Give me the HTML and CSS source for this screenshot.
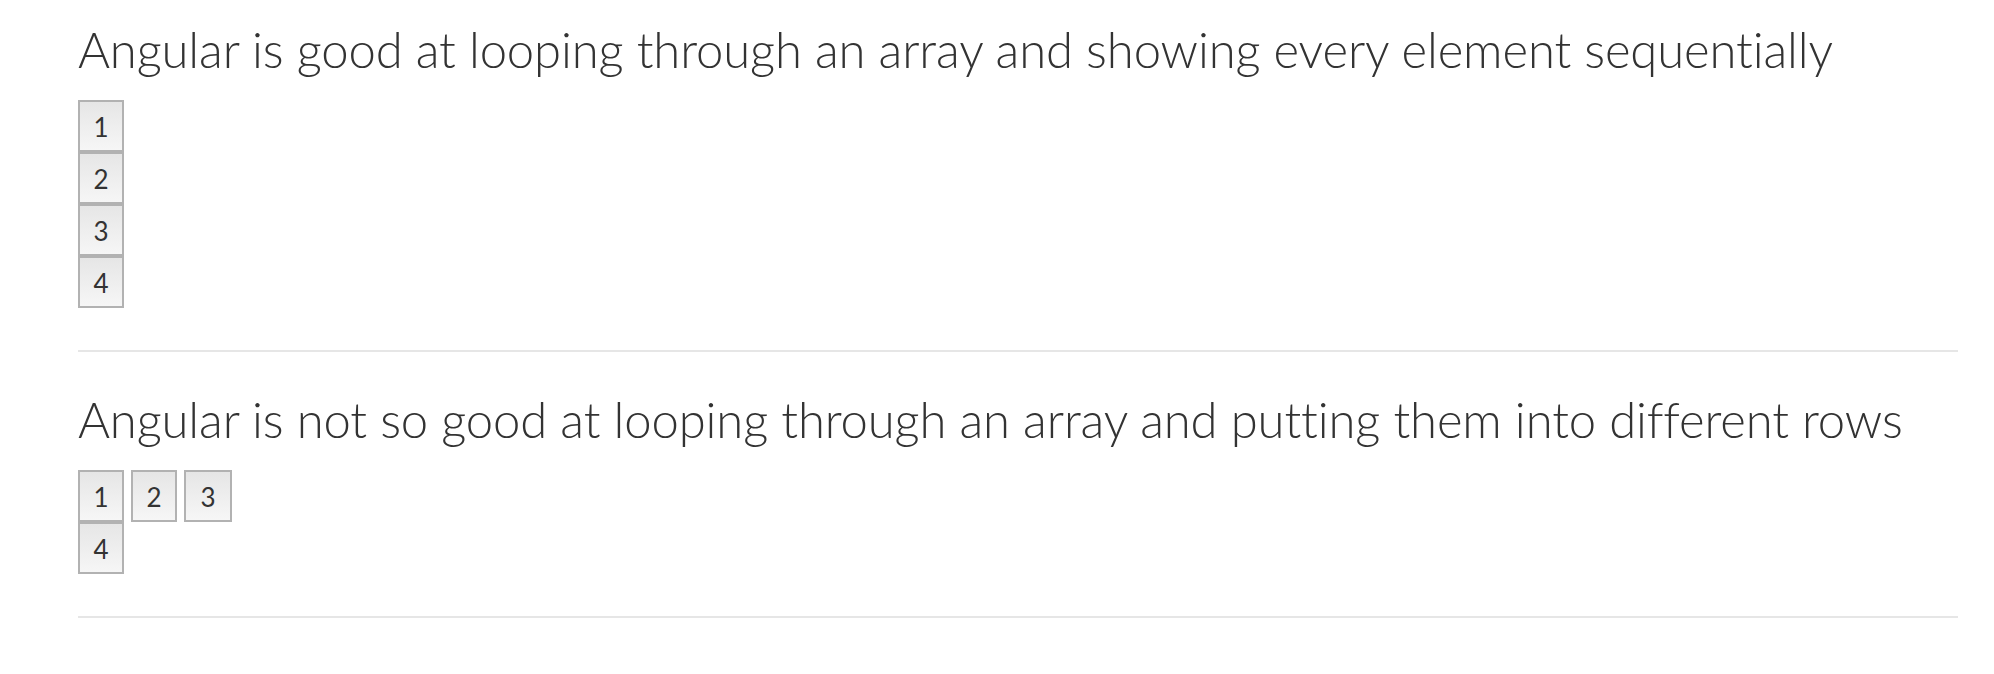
FILE: index.html
```html
<!DOCTYPE html>
<html lang="en">
<head>
<meta charset="utf-8">
<title>Angular loops</title>
<link rel="stylesheet" href="styles.css">
</head>
<body>
<div class="page">
  <section class="demo">
    <h2 class="demo-title">Angular is good at looping through an array and showing every element sequentially</h2>
    <div class="stack">
      <div class="cell">1</div>
      <div class="cell">2</div>
      <div class="cell">3</div>
      <div class="cell">4</div>
    </div>
  </section>
  <hr class="divider">
  <section class="demo">
    <h2 class="demo-title">Angular is not so good at looping through an array and putting them into different rows</h2>
    <div class="stack">
      <div class="row">
        <div class="cell">1</div>
        <div class="cell">2</div>
        <div class="cell cell-wide">3</div>
      </div>
      <div class="row">
        <div class="cell">4</div>
      </div>
    </div>
  </section>
  <hr class="divider">
</div>
</body>
</html>
```
FILE: styles.css
```css
html, body {
  margin: 0;
  padding: 0;
  background: #ffffff;
}

body {
  font-family: "Lato", "Open Sans", "Liberation Sans", sans-serif;
  color: #333333;
}

.page {
  padding: 19px 36px 0 78px;
}

.demo {
  display: flex;
  flex-direction: column;
}

.demo-title {
  margin: 0 0 21px 0;
  font-size: 49px;
  font-weight: 300;
  line-height: 60px;
  letter-spacing: -0.12px;
  font-variant-ligatures: none;
  color: #333333;
  white-space: nowrap;
}

.stack {
  display: flex;
  flex-direction: column;
  align-items: flex-start;
}

.row {
  display: flex;
  gap: 7px;
}

.cell {
  box-sizing: border-box;
  width: 46px;
  height: 52px;
  border: 2px solid #b2b2b2;
  background: linear-gradient(to bottom, #e6e6e6, #f6f6f6);
  display: flex;
  align-items: center;
  justify-content: center;
  padding-top: 1px;
  font-size: 26px;
  font-weight: 400;
  color: #333333;
}

.cell-wide {
  width: 48px;
}

.divider {
  margin: 42px 0 37px 0;
  border: 0;
  height: 2px;
  background: #e6e6e6;
}
```
